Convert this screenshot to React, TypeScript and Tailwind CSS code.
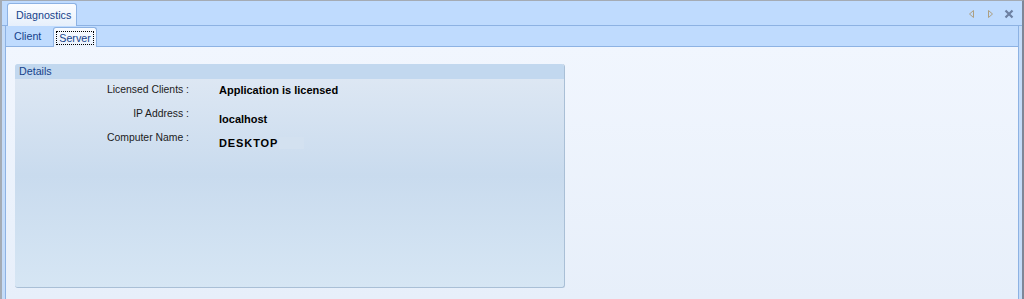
const NavIcons = () => {
  return (
    <div className="ml-auto mr-[8px] mt-[8px] flex items-start gap-[10px]">
      <svg width="8" height="10" viewBox="0 0 8 10">
        <path d="M5.5 1.5 L1.5 5 L5.5 8.5 Z" fill="none" stroke="#ad9f82" strokeWidth="1" />
      </svg>
      <svg width="8" height="10" viewBox="0 0 8 10">
        <path d="M2.5 1.5 L6.5 5 L2.5 8.5 Z" fill="none" stroke="#ad9f82" strokeWidth="1" />
      </svg>
      <svg width="10" height="10" viewBox="0 0 10 10">
        <path d="M1.5 1.5 L8.5 8.5 M8.5 1.5 L1.5 8.5" stroke="#6d80a2" strokeWidth="2.2" />
      </svg>
    </div>
  );
};

const Row = ({
  label,
  children,
  offset,
}: {
  label: string;
  children: React.ReactNode;
  offset?: boolean;
}) => {
  return (
    <div className="flex h-[24px] items-start">
      <div className="w-[174px] text-right text-[10.4px] leading-[12px] text-[#1b1b1b]">
        {label} :
      </div>
      <div className={`ml-[30px] flex items-center text-[11px] font-bold leading-[12px] text-black ${offset ? "pt-[5px]" : ""}`}>
        {children}
      </div>
    </div>
  );
};

export default function App() {
  return (
    <div
      className="flex h-[299px] w-[1024px] flex-col overflow-hidden border-t border-l-2 border-r-2 border-t-[#a4abb4] border-l-[#a4abb4] border-r-[#7d8798] bg-[#c4dbf8] text-[#1b1b1b]"
      style={{ fontFamily: '"Liberation Sans", Arial, sans-serif' }}
    >
      {/* document tab strip */}
      <div className="flex h-[25px] shrink-0 border-b border-[#8db2e3] bg-[#bfdbfe]">
        <div className="ml-[5px] mt-[2px] -mb-px flex h-[23px] w-[70px] items-center rounded-t-[3px] border border-b-0 border-[#8db2e3] bg-linear-to-b from-[#fbfdff] to-[#e6effb] pl-[8px] text-[10.7px] text-[#15428b]">
          Diagnostics
        </div>
        <NavIcons />
      </div>

      {/* page panel */}
      <div className="flex flex-1 flex-col px-[3px]">
        <div className="flex flex-1 flex-col border-l border-r border-[#8db2e3]">
          {/* sub tabs */}
          <div className="flex h-[21px] shrink-0 items-end border-b border-[#8db2e3] bg-[#bfdbfe]">
            <div className="flex h-[20px] w-[47px] items-center pl-[8px] text-[10.7px] text-[#15428b]">
              Client
            </div>
            <div className="-mb-px flex h-[20px] w-[44px] items-center justify-center rounded-t-[3px] border border-b-0 border-[#8db2e3] bg-linear-to-b from-[#f8fbff] to-[#eaf2fd]">
              <span className="border border-dotted border-black px-[2px] text-[10.7px] leading-[12px] text-[#15428b]">
                Server
              </span>
            </div>
          </div>

          {/* content */}
          <div className="flex-1 bg-linear-to-b from-[#f1f6fe] to-[#e7effa] pl-[9px] pt-[17px]">
            <div className="flex h-[224px] w-[550px] flex-col rounded-[3px] border-r border-b border-[#a9bfd6] bg-linear-to-b from-[#e0e9f4] via-[#c9dbee] to-[#d6e6f4]">
              <div className="flex h-[15px] items-center rounded-t-[3px] bg-[#c2d8ef] pl-[4px] text-[10.7px] text-[#15428b]">
                Details
              </div>
              <div className="flex flex-col pt-[5px]">
                <Row label="Licensed Clients">Application is licensed</Row>
                <Row label="IP Address" offset>
                  localhost
                </Row>
                <Row label="Computer Name" offset>
                  <span className="tracking-[0.9px]">DESKTOP</span>
                  <span className="ml-[1px] inline-block h-[12px] w-[25px] bg-[#d3e1f0]" />
                </Row>
              </div>
            </div>
          </div>
        </div>
      </div>
    </div>
  );
}
